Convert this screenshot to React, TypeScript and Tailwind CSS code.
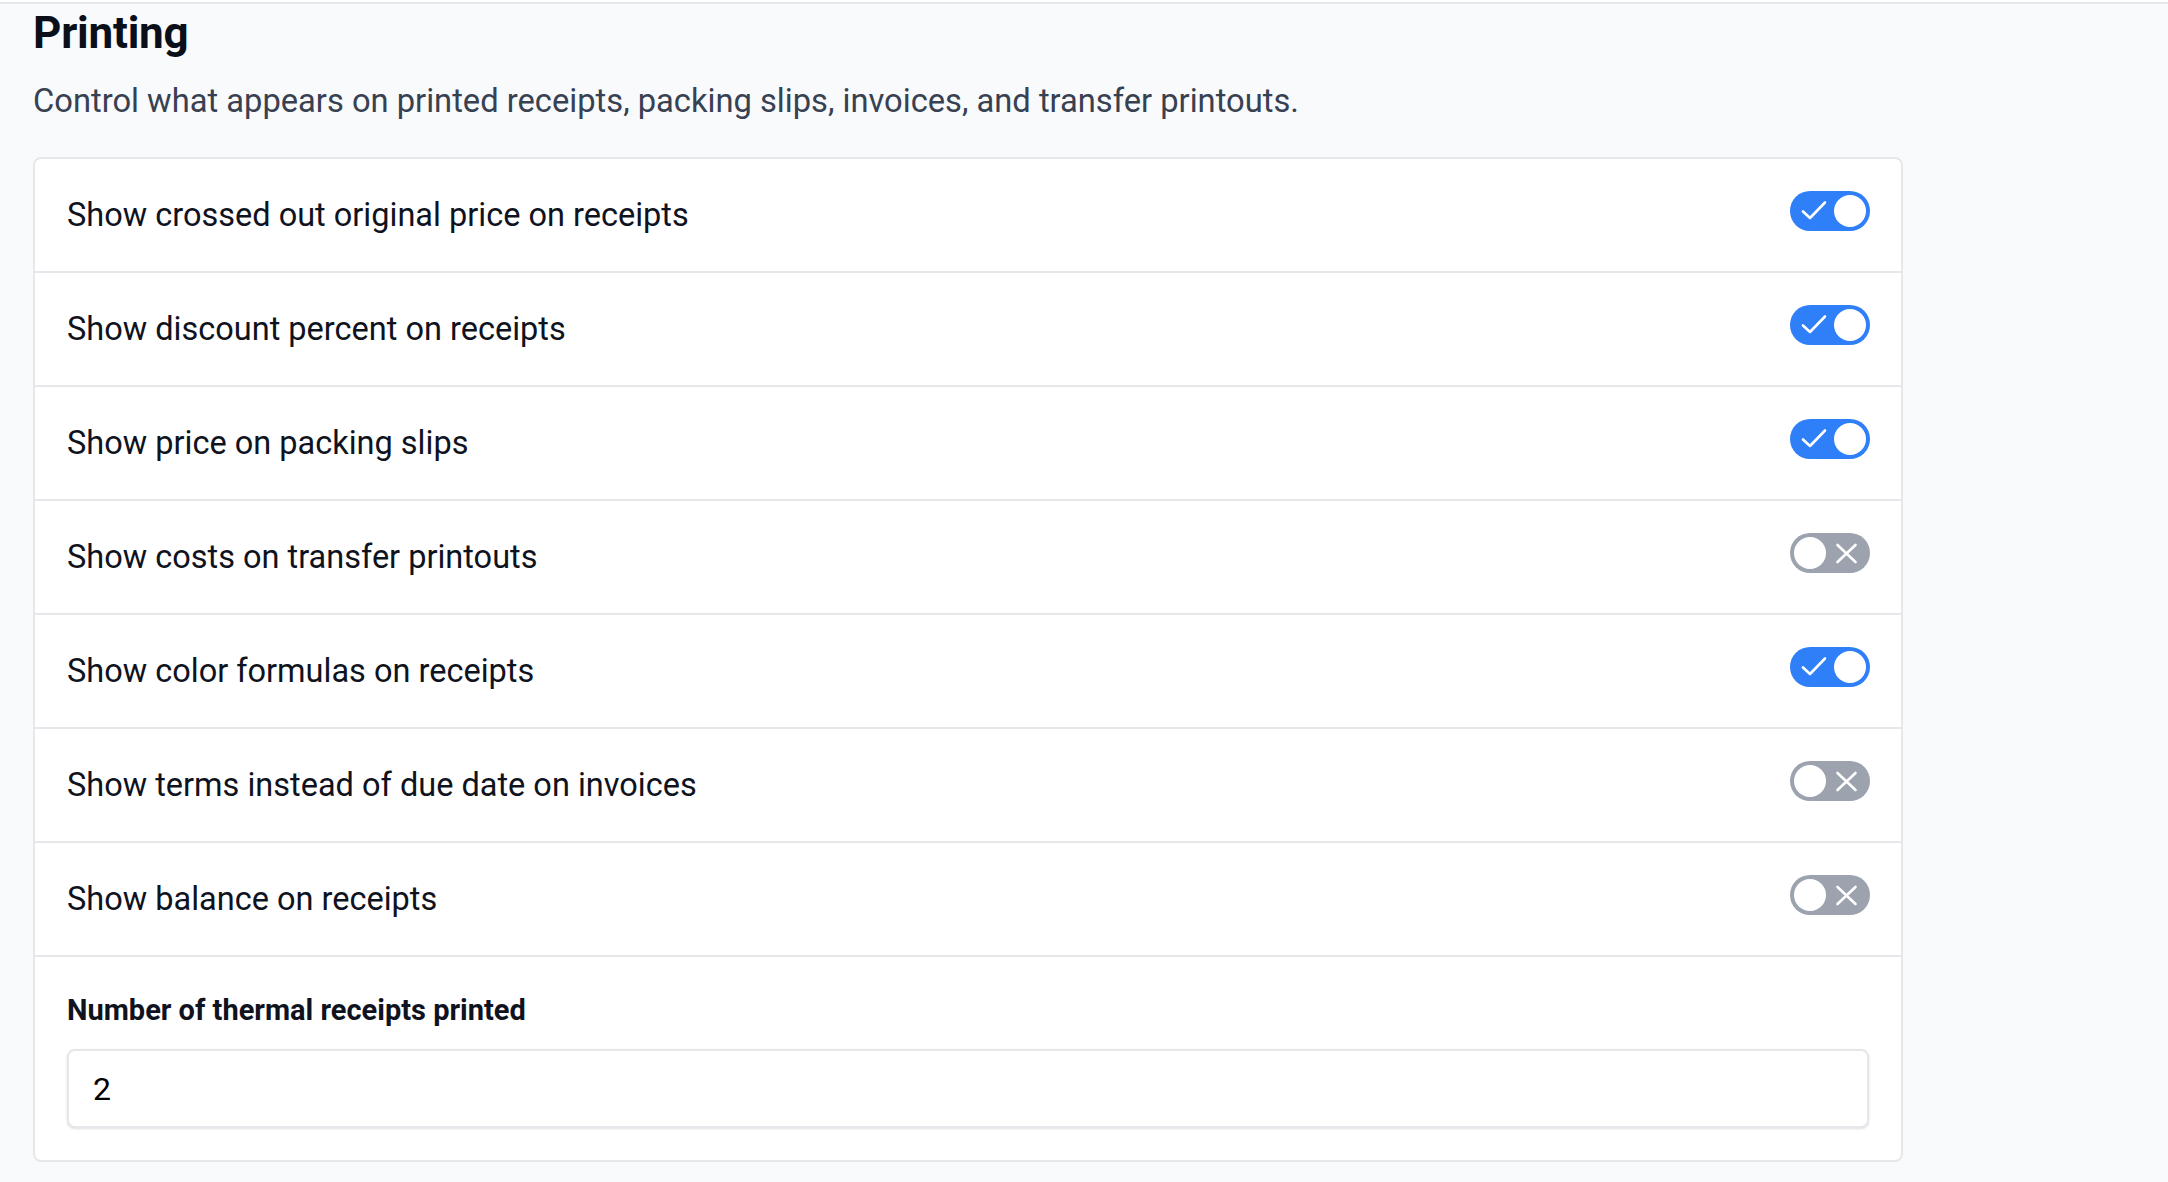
/**
 * Printing settings panel
 */

import { useState } from 'react';

interface PrintSetting {
  id: string;
  label: string;
  enabled: boolean;
}

const PRINT_SETTINGS: PrintSetting[] = [
  { id: 'crossedOutPrice', label: 'Show crossed out original price on receipts', enabled: true },
  { id: 'discountPercent', label: 'Show discount percent on receipts', enabled: true },
  { id: 'packingSlipPrice', label: 'Show price on packing slips', enabled: true },
  { id: 'transferCosts', label: 'Show costs on transfer printouts', enabled: false },
  { id: 'colorFormulas', label: 'Show color formulas on receipts', enabled: true },
  { id: 'invoiceTerms', label: 'Show terms instead of due date on invoices', enabled: false },
  { id: 'balance', label: 'Show balance on receipts', enabled: false }
];

function Toggle({ checked, onChange }: { checked: boolean; onChange: () => void }) {
  return (
    <button
      type="button"
      role="switch"
      aria-checked={checked}
      onClick={onChange}
      className={
        checked
          ? 'relative mb-2 h-[40px] w-[80px] shrink-0 rounded-full bg-[#2f7ff8]'
          : 'relative mb-2 h-[40px] w-[80px] shrink-0 rounded-full bg-[#9ca3af]'
      }
    >
      <svg className="absolute inset-0" width="80" height="40" viewBox="0 0 80 40" fill="none">
        {checked ? (
          <path d="M13 20.5 L20 27 L35 11.5" stroke="white" strokeWidth="2.6" strokeLinecap="round" strokeLinejoin="round" />
        ) : (
          <path d="M47.5 12 L65.5 29 M65.5 12 L47.5 29" stroke="white" strokeWidth="2.6" strokeLinecap="round" />
        )}
      </svg>
      <span
        className={
          checked
            ? 'absolute top-[4px] right-[4px] h-[32px] w-[32px] rounded-full bg-white'
            : 'absolute top-[4px] left-[4px] h-[32px] w-[32px] rounded-full bg-white'
        }
      />
    </button>
  );
}

export default function App() {
  const [settings, setSettings] = useState(PRINT_SETTINGS);
  const [receiptCount, setReceiptCount] = useState('2');

  const toggle = (id: string) =>
    setSettings((prev) => prev.map((s) => (s.id === id ? { ...s, enabled: !s.enabled } : s)));

  return (
    <div className="min-h-screen bg-white pt-[2px] font-['Roboto',sans-serif]">
      <div className="min-h-[1180px] border-t-2 border-[#e5e7eb] bg-[#f9fafb] px-[33px] pt-[3px]">
        <h1 className="text-[44px] font-bold leading-[52px] tracking-[-0.2px] text-[#0b0f19]">Printing</h1>
        <p className="mt-[20px] text-[32.7px] leading-[44px] text-[#374151]">
          Control what appears on printed receipts, packing slips, invoices, and transfer printouts.
        </p>

        {/* settings card */}
        <div className="mt-[34px] w-[1870px] rounded-lg border-2 border-[#e5e7eb] bg-white">
          {settings.map((s) => (
            <div
              key={s.id}
              className="flex h-[114px] items-center justify-between border-b-2 border-[#e5e7eb] pl-[32px] pr-[31px]"
            >
              <span className="text-[32.5px] leading-[44px] text-[#0f1320]">{s.label}</span>
              <Toggle checked={s.enabled} onChange={() => toggle(s.id)} />
            </div>
          ))}

          <div className="pl-[32px] pr-[32px] pt-[35px] pb-[32px]">
            <label htmlFor="receipt-count" className="block text-[29px] font-bold leading-[36px] text-[#0f1320]">
              Number of thermal receipts printed
            </label>
            <input
              id="receipt-count"
              value={receiptCount}
              onChange={(e) => setReceiptCount(e.target.value)}
              className="mt-[21px] block h-[79px] w-full rounded-lg border-2 border-[#e5e7eb] bg-white px-6 text-[32px] text-black shadow-sm outline-none"
            />
          </div>
        </div>
      </div>
    </div>
  );
}
